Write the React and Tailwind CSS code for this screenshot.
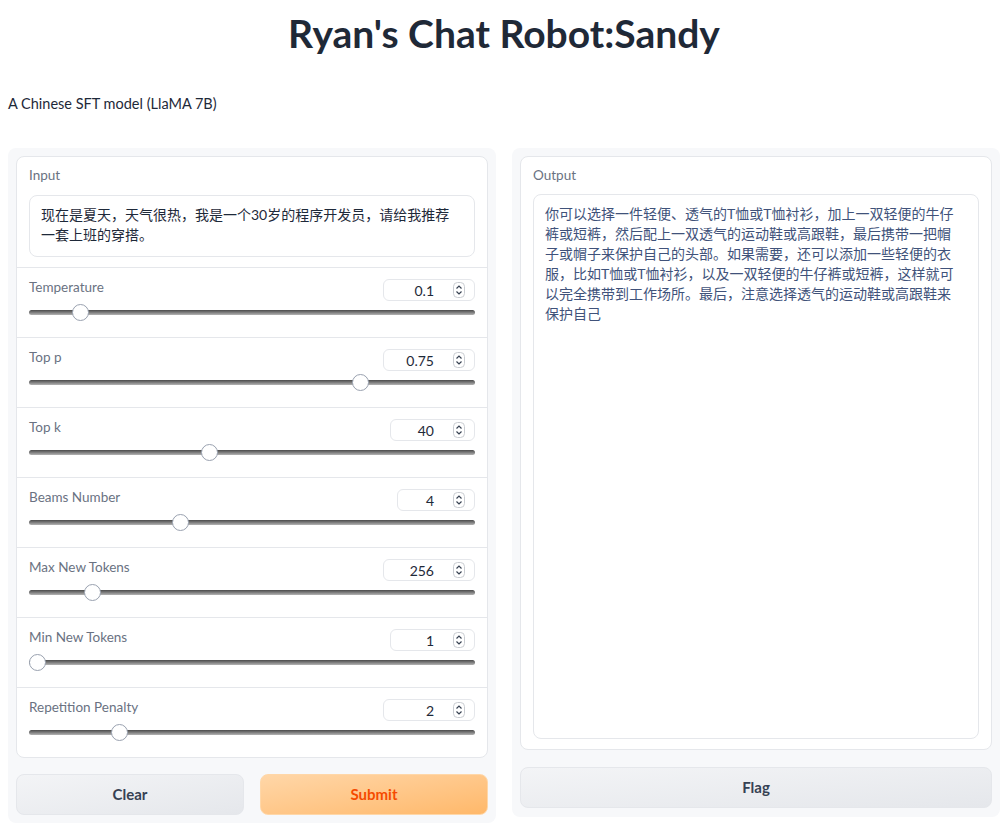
const font = {
  fontFamily: 'Lato, "Noto Sans CJK SC", "Noto Sans", sans-serif',
};

const sliders = [
  { label: "Temperature", value: "0.1", pos: 0.1, box: "w-[92px]" },
  { label: "Top p", value: "0.75", pos: 0.75, box: "w-[92px]" },
  { label: "Top k", value: "40", pos: 0.4, box: "w-[85px]" },
  { label: "Beams Number", value: "4", pos: 0.333, box: "w-[78px]" },
  { label: "Max New Tokens", value: "256", pos: 0.128, box: "w-[92px]" },
  { label: "Min New Tokens", value: "1", pos: 0, box: "w-[85px]" },
  { label: "Repetition Penalty", value: "2", pos: 0.19, box: "w-[92px]" },
];

const outputLines = [
  "你可以选择一件轻便、透气的T恤或T恤衬衫，加上一双轻便的牛仔",
  "裤或短裤，然后配上一双透气的运动鞋或高跟鞋，最后携带一把帽",
  "子或帽子来保护自己的头部。如果需要，还可以添加一些轻便的衣",
  "服，比如T恤或T恤衬衫，以及一双轻便的牛仔裤或短裤，这样就可",
  "以完全携带到工作场所。最后，注意选择透气的运动鞋或高跟鞋来",
  "保护自己",
];

function Spinner() {
  return (
    <svg width="12" height="16" viewBox="0 0 12 16" className="shrink-0">
      <rect x="0.5" y="0.5" width="11" height="15" rx="4" fill="#fff" stroke="#c9ccd1" />
      <path d="M3.5 6.5 L6 4 L8.5 6.5" fill="none" stroke="#374151" strokeWidth="1.2" />
      <path d="M3.5 9.5 L6 12 L8.5 9.5" fill="none" stroke="#374151" strokeWidth="1.2" />
    </svg>
  );
}

function SliderRow({ item }) {
  return (
    <div className="border-t border-gray-200 px-3 pt-[11px] pb-[17px]">
      <div className="flex items-start justify-between h-[22px]">
        <span className="text-[13.5px] leading-4 text-gray-500">{item.label}</span>
        <div
          className={`${item.box} h-[22px] rounded-md border border-gray-200 flex items-center justify-end gap-[19px] pr-[9px]`}
        >
          <span className="text-[14px] text-gray-800">{item.value}</span>
          <Spinner />
        </div>
      </div>
      <div className="relative h-4 mt-[3px]">
        <div className="absolute left-0 right-0 top-[6px] h-[5px] rounded-full bg-gradient-to-b from-[#4b4b4b] to-[#b5b5b5]" />
        <div
          className="absolute top-0 w-[17px] h-[17px] -ml-2 rounded-full bg-white border border-gray-400"
          style={{ left: `calc(8px + ${item.pos} * (100% - 16px))` }}
        />
      </div>
    </div>
  );
}

export default function App() {
  return (
    <div className="bg-white min-h-screen pl-2 pr-[1px]" style={font}>
      <h1 className="text-center text-[39px] leading-[48px] font-bold text-[#1f2937] pt-[9px]">
        Ryan's Chat Robot:Sandy
      </h1>
      <p className="mt-[37px] text-[14.5px] leading-5 text-gray-800">A Chinese SFT model (LlaMA 7B)</p>

      <div className="mt-[34px] grid grid-cols-2 gap-4 items-start">
        {/* left column */}
        <div className="bg-[#f7f8fa] rounded-lg p-2">
          <div className="bg-white border border-gray-200 rounded-lg">
            <div className="px-3 pt-[10px] pb-[10px]">
              <div className="text-[13.5px] leading-4 text-gray-500">Input</div>
              <div className="mt-[12px] border border-gray-200 rounded-lg px-[11px] py-[9px] h-[62px] text-[14px] leading-5 text-gray-800">
                现在是夏天，天气很热，我是一个30岁的程序开发员，请给我推荐一套上班的穿搭。
              </div>
            </div>
            {sliders.map((s) => (
              <SliderRow key={s.label} item={s} />
            ))}
          </div>
          <div className="grid grid-cols-2 gap-4 mt-[16px]">
            <button className="h-[41px] rounded-lg border border-gray-200 bg-gradient-to-br from-gray-100 to-gray-200 text-[15px] font-bold text-gray-700">
              Clear
            </button>
            <button className="h-[41px] rounded-lg border border-orange-200 bg-gradient-to-br from-orange-200 to-orange-300 text-[15px] font-bold text-orange-600">
              Submit
            </button>
          </div>
        </div>

        {/* right column */}
        <div className="bg-[#f7f8fa] rounded-lg pl-2 pr-2 pt-2 pb-[9px]">
          <div className="bg-white border border-gray-200 rounded-lg px-3 pt-[10px] pb-[10px]">
            <div className="text-[13.5px] leading-4 text-gray-500">Output</div>
            <div className="mt-[11px] border border-gray-200 rounded-lg px-[11px] py-[9px] h-[545px] text-[14px] leading-5 text-[#40527a]">
              {outputLines.map((line) => (
                <div key={line} className="whitespace-nowrap">
                  {line}
                </div>
              ))}
            </div>
          </div>
          <button className="mt-[17px] w-full h-[41px] rounded-lg border border-gray-200 bg-gradient-to-br from-gray-100 to-gray-200 text-[15px] font-bold text-gray-700">
            Flag
          </button>
        </div>
      </div>
    </div>
  );
}
